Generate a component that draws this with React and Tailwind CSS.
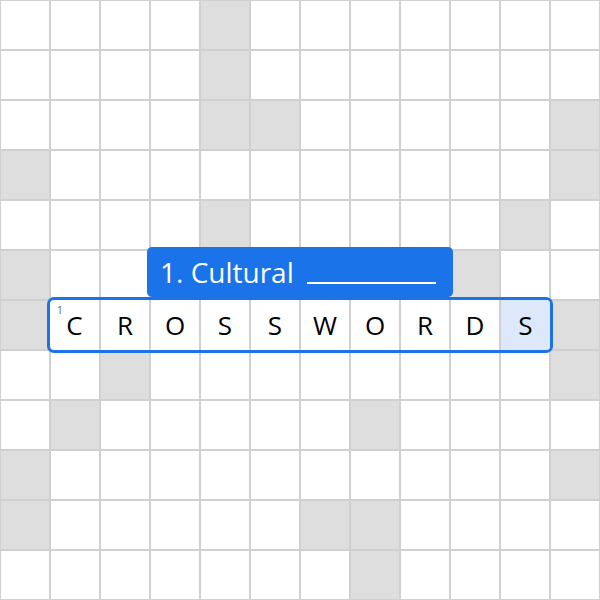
import React from 'react';

// dark (blocked) cells, by row
const darkCells = {
  0: [4],
  1: [4],
  2: [4, 5, 11],
  3: [0, 11],
  4: [4, 10],
  5: [0, 9],
  6: [0, 11],
  7: [2, 11],
  8: [1, 7],
  9: [0, 11],
  10: [0, 6, 7],
  11: [7],
};

const word = 'CROSSWORDS'.split('');

const App = () => {
  const cells = [];
  for (let r = 0; r < 12; r++) {
    for (let c = 0; c < 12; c++) {
      const dark = darkCells[r].includes(c);
      cells.push(
        <div
          key={`${r}-${c}`}
          className={`h-[50px] w-[50px] border border-[#d0d0d0] ${dark ? 'bg-[#dedede]' : 'bg-white'}`}
        />
      );
    }
  }

  return (
    <div className="relative w-[600px] h-[600px] bg-white overflow-hidden" style={{ fontFamily: '"Open Sans", Roboto, sans-serif' }}>
      <div className="grid grid-cols-12">{cells}</div>

      {/* Clue tooltip */}
      <div className="absolute left-[147px] top-[247px] w-[306px] h-[50px] bg-[#1a73e8] rounded-[5px] flex items-center pl-[13px] text-white">
        <span className="text-[28px] leading-none font-medium">1. Cultural</span>
        <span className="ml-[13px] mt-[22px] w-[129px] border-b-2 border-white" />
      </div>

      {/* Selected word */}
      <div className="absolute left-[47px] top-[297px] w-[506px] h-[56px] border-[3px] border-[#1a73e8] rounded-[7px] bg-white flex overflow-hidden">
        {word.map((ch, i) => (
          <div
            key={i}
            className={`relative w-[50px] h-[50px] flex items-center justify-center text-[26px] font-medium text-black ${i > 0 ? 'border-l border-[#d0d0d0]' : ''} ${i < word.length - 1 ? 'border-r border-[#d0d0d0]' : ''} ${i === word.length - 1 ? 'bg-[#dde9fa]' : ''}`}
          >
            {i === 0 && (
              <span className="absolute left-[7px] top-[5px] text-[10px] leading-none text-[#666]">1</span>
            )}
            {ch}
          </div>
        ))}
      </div>
    </div>
  );
};

export default App;
